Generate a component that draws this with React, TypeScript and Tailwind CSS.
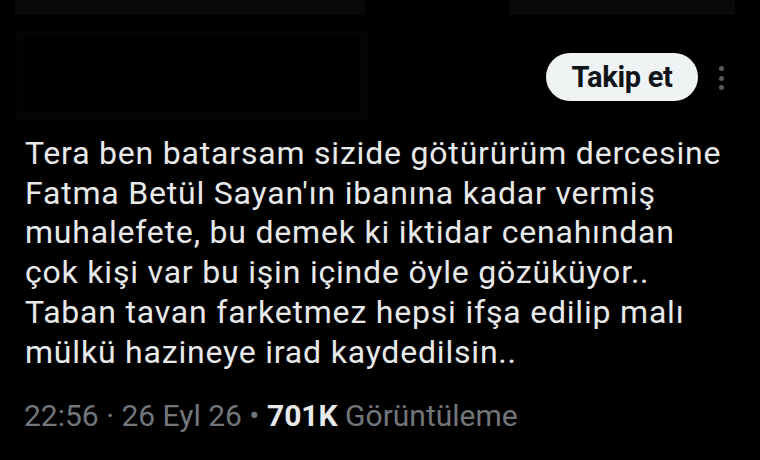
const lines = [
  "Tera ben batarsam sizide götürürüm dercesine",
  "Fatma Betül Sayan'ın ibanına kadar vermiş",
  "muhalefete, bu demek ki iktidar cenahından",
  "çok kişi var bu işin içinde öyle gözüküyor..",
  "Taban tavan farketmez hepsi ifşa edilip malı",
  "mülkü hazineye irad kaydedilsin..",
];

export default function App() {
  return (
    <div className="w-[760px] h-[460px] bg-black overflow-hidden font-['Roboto',sans-serif]">
      {/* faded strips at top edge */}
      <div className="flex h-[15px]">
        <div className="ml-[15px] w-[350px] bg-[#090909]" />
        <div className="ml-[145px] w-[225px] bg-[#090909]" />
      </div>

      <div className="flex items-start h-[105px]">
        {/* redacted header box */}
        <div className="ml-[15px] mt-[15px] w-[353px] h-[90px] bg-[#040404] p-[8px]">
          <div className="w-full h-full bg-black" />
        </div>
        <div className="flex-1" />
        <button className="mt-[38px] w-[152px] h-[48px] rounded-full bg-[#eff3f4] text-[#0f1419] text-[29px] font-bold tracking-[-0.3px] leading-none">
          Takip et
        </button>
        <div className="mt-[51px] ml-[21px] mr-[36px] flex flex-col gap-[4.5px]">
          <div className="w-[5px] h-[5px] rounded-full bg-[#5a5a5a]" />
          <div className="w-[5px] h-[5px] rounded-full bg-[#5a5a5a]" />
          <div className="w-[5px] h-[5px] rounded-full bg-[#5a5a5a]" />
        </div>
      </div>

      <div className="pl-[25px] pt-[14px] text-[#e7e9ea] text-[32px] leading-[39.7px] tracking-[0.8px]">
        {lines.map((l) => (
          <div key={l} className="whitespace-nowrap">
            {l}
          </div>
        ))}
      </div>

      <div className="pl-[24px] mt-[27px] text-[30px] leading-[34px] text-[#71767b] whitespace-nowrap">
        22:56 · 26 Eyl 26 <span>•</span>{" "}
        <span className="font-bold text-[#e7e9ea]">701K</span> Görüntüleme
      </div>
    </div>
  );
}
